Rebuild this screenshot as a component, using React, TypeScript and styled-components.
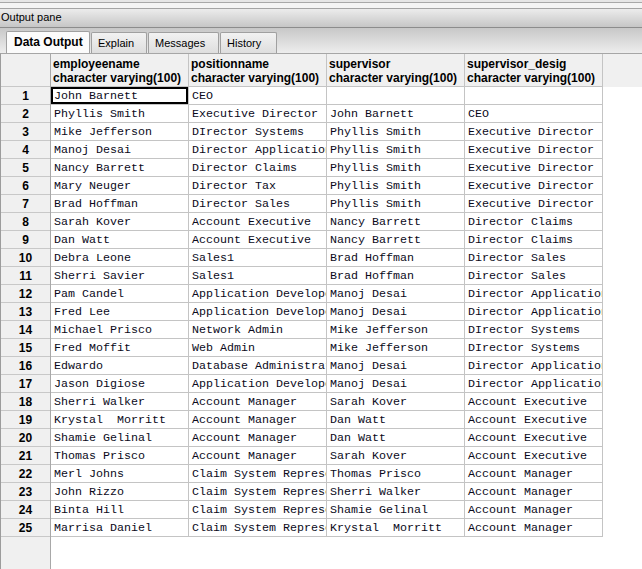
import React from "react";
import styled, { createGlobalStyle } from "styled-components";

const GlobalStyle = createGlobalStyle`
  html, body { margin: 0; padding: 0; background: #ffffff; overflow: hidden; }
  #root { width: 642px; height: 569px; }
`;

type Row = [string, string, string, string];

const rows: Row[] = [
  ["John Barnett", "CEO", "", ""],
  ["Phyllis Smith", "Executive Director", "John Barnett", "CEO"],
  ["Mike Jefferson", "DIrector Systems", "Phyllis Smith", "Executive Director"],
  ["Manoj Desai", "Director Applications", "Phyllis Smith", "Executive Director"],
  ["Nancy Barrett", "Director Claims", "Phyllis Smith", "Executive Director"],
  ["Mary Neuger", "Director Tax", "Phyllis Smith", "Executive Director"],
  ["Brad Hoffman", "Director Sales", "Phyllis Smith", "Executive Director"],
  ["Sarah Kover", "Account Executive", "Nancy Barrett", "Director Claims"],
  ["Dan Watt", "Account Executive", "Nancy Barrett", "Director Claims"],
  ["Debra Leone", "Sales1", "Brad Hoffman", "Director Sales"],
  ["Sherri Savier", "Sales1", "Brad Hoffman", "Director Sales"],
  ["Pam Candel", "Application Developer", "Manoj Desai", "Director Applications"],
  ["Fred Lee", "Application Developer", "Manoj Desai", "Director Applications"],
  ["Michael Prisco", "Network Admin", "Mike Jefferson", "DIrector Systems"],
  ["Fred Moffit", "Web Admin", "Mike Jefferson", "DIrector Systems"],
  ["Edwardo", "Database Administrator", "Manoj Desai", "Director Applications"],
  ["Jason Digiose", "Application Developer", "Manoj Desai", "Director Applications"],
  ["Sherri Walker", "Account Manager", "Sarah Kover", "Account Executive"],
  ["Krystal  Morritt", "Account Manager", "Dan Watt", "Account Executive"],
  ["Shamie Gelinal", "Account Manager", "Dan Watt", "Account Executive"],
  ["Thomas Prisco", "Account Manager", "Sarah Kover", "Account Executive"],
  ["Merl Johns", "Claim System Representative", "Thomas Prisco", "Account Manager"],
  ["John Rizzo", "Claim System Representative", "Sherri Walker", "Account Manager"],
  ["Binta Hill", "Claim System Representative", "Shamie Gelinal", "Account Manager"],
  ["Marrisa Daniel", "Claim System Representative", "Krystal  Morritt", "Account Manager"],
];

const columns = ["employeename", "positionname", "supervisor", "supervisor_desig"];
const tabs: { label: string; width: number }[] = [
  { label: "Data Output", width: 84 },
  { label: "Explain", width: 56 },
  { label: "Messages", width: 71 },
  { label: "History", width: 57 },
];

const Page = styled.div`
  width: 642px;
  height: 569px;
  display: flex;
  flex-direction: column;
  font-family: "Liberation Sans", Arial, sans-serif;
  color: #000;
`;

const TopStrip = styled.div`
  height: 8px;
  flex: none;
  box-sizing: border-box;
  background: linear-gradient(#e6e6e6 0 2px, #a8a8a8 2px 3px, #f4f4f4 3px);
`;

const TitleBar = styled.div`
  height: 20px;
  flex: none;
  box-sizing: border-box;
  border-top: 1px solid #a4a4a4;
  border-bottom: 1px solid #8c8c8c;
  background: linear-gradient(#ececec, #c6c6c6);
  font-size: 11px;
  line-height: 17px;
  padding-left: 1px;
`;

const TabStrip = styled.div`
  height: 25px;
  flex: none;
  box-sizing: border-box;
  display: flex;
  align-items: flex-end;
  gap: 1px;
  padding-left: 6px;
  background: linear-gradient(#c8c8c8, #ededed);
`;

const Tab = styled.div<{ $active?: boolean; $width: number }>`
  box-sizing: border-box;
  width: ${(p) => p.$width}px;
  height: ${(p) => (p.$active ? 22 : 21)}px;
  padding-left: ${(p) => (p.$active ? 7 : 6)}px;
  border: 1px solid #a0a0a0;
  border-bottom: none;
  border-radius: 2px 2px 0 0;
  background: ${(p) =>
    p.$active ? "#fbfbfb" : "linear-gradient(#f2f2f2, #dedede)"};
  font-size: ${(p) => (p.$active ? 12 : 11)}px;
  font-weight: ${(p) => (p.$active ? 700 : 400)};
  line-height: ${(p) => (p.$active ? 21 : 20)}px;
  white-space: nowrap;
  overflow: hidden;
`;

const Grid = styled.div`
  flex: 1;
  display: flex;
  box-sizing: border-box;
  border-top: 1px solid #a6a6a6;
  border-left: 1px solid #9c9c9c;
  background: #ffffff;
  overflow: hidden;
`;

const RowHeaderCol = styled.div`
  width: 49px;
  flex: none;
  border-right: 1px solid #a8a8a8;
  background: #f0f0f0;
  display: flex;
  flex-direction: column;
`;

const Corner = styled.div`
  height: 32px;
  border-bottom: 1px solid #c8c8c8;
`;

const RowNum = styled.div`
  box-sizing: border-box;
  height: 18px;
  padding-top: 1px;
  border-bottom: 1px solid #c8c8c8;
  font-size: 12px;
  font-weight: 700;
  line-height: 16px;
  text-align: center;
`;

const DataArea = styled.div`
  flex: 1;
  display: flex;
  flex-direction: column;
`;

const HeaderRow = styled.div`
  display: flex;
  height: 33px;
  background: #f0f0f0;
`;

const HeaderCell = styled.div`
  width: 138px;
  box-sizing: border-box;
  border-right: 1px solid #c4c4c4;
  border-bottom: 1px solid #c4c4c4;
  padding: 3px 0 0 2px;
  font-size: 12px;
  font-weight: 700;
  line-height: 14px;
  white-space: nowrap;
  overflow: hidden;
`;

const DataRow = styled.div`
  display: flex;
  height: 18px;
`;

const Cell = styled.div<{ $selected?: boolean }>`
  width: 138px;
  box-sizing: border-box;
  border-right: 1px solid #c4c4c4;
  border-bottom: 1px solid #c4c4c4;
  padding: 1px 0 0 3px;
  font-family: "Liberation Mono", "Courier New", monospace;
  font-size: 11.67px;
  line-height: 16px;
  white-space: pre;
  overflow: hidden;
  color: #0a0a1a;
  box-shadow: ${(p) => (p.$selected ? "inset 0 0 0 2px #000" : "none")};
`;

export default function App() {
  return (
    <>
      <GlobalStyle />
      <Page>
        <TopStrip />
        <TitleBar>Output pane</TitleBar>
        <TabStrip>
          {tabs.map((t, i) => (
            <Tab key={t.label} $active={i === 0} $width={t.width}>
              {t.label}
            </Tab>
          ))}
        </TabStrip>
        <Grid>
          <RowHeaderCol>
            <Corner />
            {rows.map((_, i) => (
              <RowNum key={i}>{i + 1}</RowNum>
            ))}
          </RowHeaderCol>
          <DataArea>
            <HeaderRow>
              {columns.map((c) => (
                <HeaderCell key={c}>
                  {c}
                  <br />
                  character varying(100)
                </HeaderCell>
              ))}
            </HeaderRow>
            {rows.map((r, i) => (
              <DataRow key={i}>
                {r.map((v, j) => (
                  <Cell key={j} $selected={i === 0 && j === 0}>
                    {v}
                  </Cell>
                ))}
              </DataRow>
            ))}
          </DataArea>
        </Grid>
      </Page>
    </>
  );
}
